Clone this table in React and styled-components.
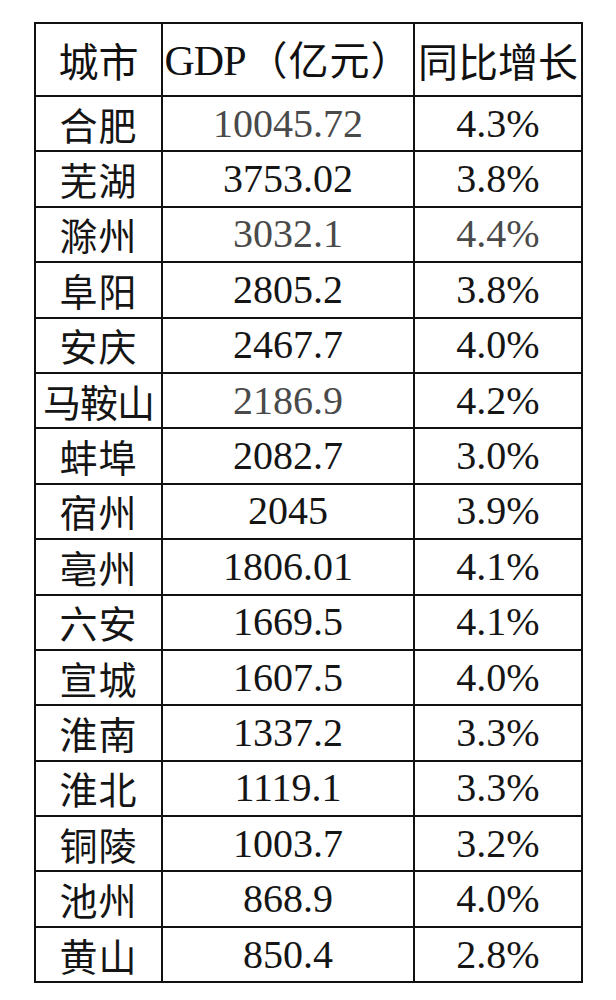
import React from 'react';
import styled, { createGlobalStyle } from 'styled-components';

const GlobalStyle = createGlobalStyle`
  html, body {
    margin: 0;
    padding: 0;
    background: #fff;
  }
`;

const serif = '"Liberation Serif", "Times New Roman", serif';
const cjk = '"Noto Sans CJK SC", "Noto Sans", sans-serif';

const Page = styled.div`
  padding: 22px 0 0 34px;
  width: 616px;
  height: 1000px;
  box-sizing: border-box;
  background: #fff;
`;

const Table = styled.table`
  border-collapse: collapse;
  table-layout: fixed;
  width: 547px;
  color: #111;
`;

const Col = styled.col`
  width: ${(p) => p.$w}px;
`;

const HeadRow = styled.tr`
  height: 73px;
`;

const Row = styled.tr`
  height: 55.4px;
`;

const HeadCell = styled.th`
  border: 2.5px solid #111;
  padding: 0;
  font-family: ${cjk};
  font-size: 40px;
  font-weight: normal;
  text-align: center;
  white-space: nowrap;
  overflow: hidden;
  line-height: 1;
  letter-spacing: ${(p) => (p.$wide ? '1px' : '0')};
`;

const Latin = styled.span`
  font-family: ${serif};
  font-size: 42px;
  letter-spacing: -1px;
  margin-right: 2px;
`;

const Cell = styled.td`
  border: 2.5px solid #111;
  padding: 0;
  font-family: ${serif};
  font-size: 40px;
  text-align: center;
  white-space: nowrap;
  line-height: 1;
  color: ${(p) => (p.$faded ? '#4a4a4a' : '#151515')};
`;

const CityCell = styled(Cell)`
  font-family: ${cjk};
  font-size: 38px;
  color: #151515;
  letter-spacing: ${(p) => (p.$long ? '-1px' : '1px')};
`;

const rows = [
  ['合肥', '10045.72', '4.3%', true, false],
  ['芜湖', '3753.02', '3.8%'],
  ['滁州', '3032.1', '4.4%', true, true],
  ['阜阳', '2805.2', '3.8%'],
  ['安庆', '2467.7', '4.0%'],
  ['马鞍山', '2186.9', '4.2%', true],
  ['蚌埠', '2082.7', '3.0%'],
  ['宿州', '2045', '3.9%'],
  ['亳州', '1806.01', '4.1%'],
  ['六安', '1669.5', '4.1%'],
  ['宣城', '1607.5', '4.0%'],
  ['淮南', '1337.2', '3.3%'],
  ['淮北', '1119.1', '3.3%'],
  ['铜陵', '1003.7', '3.2%'],
  ['池州', '868.9', '4.0%'],
  ['黄山', '850.4', '2.8%'],
];

const App = () => (
  <>
    <GlobalStyle />
    <Page>
      <Table>
        <colgroup>
          <Col $w={127} />
          <Col $w={252} />
          <Col $w={168} />
        </colgroup>
        <thead>
          <HeadRow>
            <HeadCell>城市</HeadCell>
            <HeadCell $wide>
              <Latin>GDP</Latin>（亿元）
            </HeadCell>
            <HeadCell>同比增长</HeadCell>
          </HeadRow>
        </thead>
        <tbody>
          {rows.map(([city, gdp, growth, fadedGdp, fadedGrowth]) => (
            <Row key={city}>
              <CityCell $long={city.length > 2}>{city}</CityCell>
              <Cell $faded={fadedGdp}>{gdp}</Cell>
              <Cell $faded={fadedGrowth}>{growth}</Cell>
            </Row>
          ))}
        </tbody>
      </Table>
    </Page>
  </>
);

export default App;
